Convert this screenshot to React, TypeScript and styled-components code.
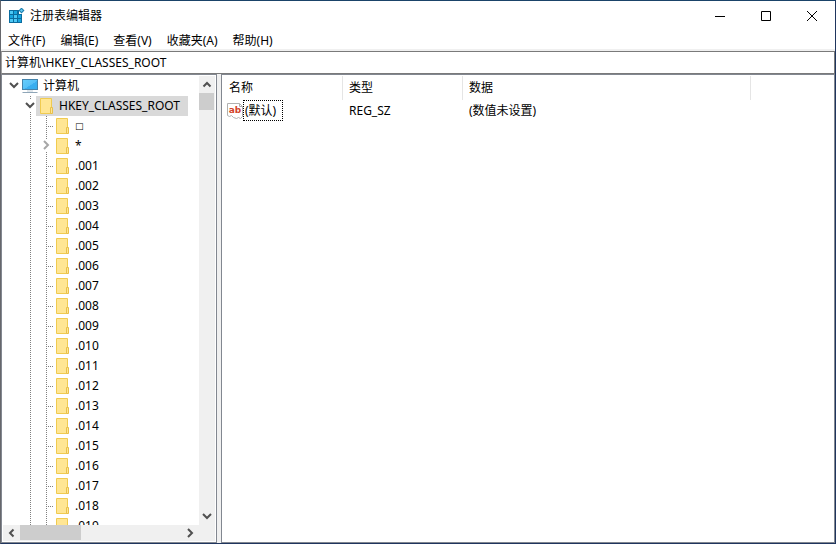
import React, { useState } from "react";
import styled, { createGlobalStyle } from "styled-components";

const GlobalStyle = createGlobalStyle`
  * { box-sizing: border-box; }
  body {
    margin: 0;
    background: #ffffff;
    color: #000000;
    font-family: "Noto Sans", "Noto Sans CJK SC", sans-serif;
    font-size: 12px;
    line-height: 20px;
  }
  button, input { font: inherit; color: inherit; }
`;

const Window = styled.div`
  display: flex;
  flex-direction: column;
  height: 100vh;
  border: 1px solid #1f355e;
  border-top-color: #1a4369;
  border-left-color: #66676c;
  background: #ffffff;
`;

const TitleBar = styled.header`
  display: flex;
  align-items: center;
  height: 30px;
  padding-left: 8px;
  flex: none;
`;

const Title = styled.h1`
  flex: 1;
  margin: 0 0 0 4px;
  font-size: 12px;
  font-weight: 400;
`;

const CaptionButton = styled.button`
  display: flex;
  align-items: center;
  justify-content: center;
  width: 46px;
  height: 30px;
  padding: 0;
  border: 0;
  background: none;
  &:hover { background: #e5e5e5; }
`;

const MenuBar = styled.nav`
  display: flex;
  flex: none;
  gap: 1px;
  height: 20px;
  border-bottom: 2px solid #f0f0f0;
`;

const MenuButton = styled.button`
  padding: 2px 7px 0;
  border: 0;
  background: none;
  line-height: 16px;
  white-space: nowrap;
  &:hover { background: #cce8ff; }
`;

const AddressInput = styled.input`
  flex: none;
  width: 100%;
  height: 23px;
  padding: 0 3px 2px;
  border: 1px solid #7a7a7a;
  border-left-color: #a0a0a0;
  outline: 0;
  background: #ffffff;
`;

const Panes = styled.main`
  display: flex;
  flex: 1;
  gap: 4px;
  min-height: 0;
  background: #f0f0f0;
`;

const Pane = styled.section`
  border: 1px solid #828790;
  background: #ffffff;
  overflow: hidden;
`;

const TreePane = styled(Pane)`
  display: grid;
  grid-template-columns: 1fr 16px;
  grid-template-rows: 1fr 16px;
  flex: none;
  width: 216px;
  padding: 1px;
`;

const ValuePane = styled(Pane)`
  flex: 1;
  padding-top: 1px;
`;

const Tree = styled.ul`
  min-height: 0;
  margin: 0;
  padding: 0 0 0 3px;
  overflow: hidden;
  list-style: none;
`;

const TreeRow = styled.li`
  display: flex;
  height: 20px;
`;

const Guide = styled.span<{ $line?: boolean; $branch?: boolean }>`
  position: relative;
  flex: none;
  width: 16px;
  height: 20px;
  &::before {
    content: "";
    display: ${(p) => (p.$line ? "block" : "none")};
    position: absolute;
    left: 8px;
    top: 0;
    width: 1px;
    height: 20px;
    background: repeating-linear-gradient(#808080 0 1px, transparent 1px 2px);
  }
  &::after {
    content: "";
    display: ${(p) => (p.$branch ? "block" : "none")};
    position: absolute;
    left: 8px;
    top: 10px;
    width: 8px;
    height: 1px;
    background: repeating-linear-gradient(90deg, #808080 0 1px, transparent 1px 2px);
  }
`;

const Expander = styled.button`
  position: absolute;
  z-index: 1;
  inset: 3px 1px 5px 0;
  display: flex;
  align-items: center;
  justify-content: center;
  padding: 0;
  border: 0;
  background: #ffffff;
`;

const Node = styled.button<{ $selected?: boolean }>`
  position: relative;
  z-index: 2;
  display: flex;
  align-items: center;
  gap: 5px;
  height: 20px;
  margin-left: ${(p) => (p.$selected ? "-2px" : "0")};
  padding: 0 8px 0 ${(p) => (p.$selected ? "2px" : "0")};
  border: 0;
  background: ${(p) => (p.$selected ? "#d9d9d9" : "transparent")};
  line-height: 20px;
  white-space: nowrap;
`;

const FolderSlot = styled.span`
  display: flex;
  width: 16px;
  padding-left: 2px;
`;

const BoxName = styled.span`
  font-family: "DejaVu Sans", sans-serif;
  font-size: 9px;
  font-weight: 700;
`;

const Scrollbar = styled.div<{ $horizontal?: boolean }>`
  display: flex;
  flex-direction: ${(p) => (p.$horizontal ? "row" : "column")};
  padding: ${(p) => (p.$horizontal ? "0 1px 0 0" : "0 0 1px")};
  background: #f0f0f0;
`;

const ScrollButton = styled.button`
  display: flex;
  align-items: center;
  justify-content: center;
  flex: 0 0 17px;
  padding: 0;
  border: 0;
  background: none;
`;

const Thumb = styled.div<{ $horizontal?: boolean }>`
  flex: none;
  width: ${(p) => (p.$horizontal ? "61px" : "15px")};
  height: ${(p) => (p.$horizontal ? "15px" : "17px")};
  background: #cdcdcd;
`;

const Spacer = styled.div`
  flex: 1;
`;

const Corner = styled.div`
  background: #f0f0f0;
`;

const ValueTable = styled.table`
  width: 100%;
  border-collapse: separate;
  border-spacing: 0;
  table-layout: fixed;
`;

const Column = styled.col<{ $width?: number }>`
  width: ${(p) => (p.$width ? p.$width + "px" : "auto")};
`;

const HeaderCell = styled.th`
  height: 24px;
  padding: 0 6px;
  border-right: 1px solid #e5e5e5;
  font-weight: 400;
  text-align: left;
  &:first-child { padding-left: 7px; }
  &:last-child { border-right: 0; }
`;

const Cell = styled.td`
  height: 21px;
  padding: 0 6px;
  white-space: nowrap;
`;

const NameCell = styled(Cell)`
  padding: 0 5px;
`;

const ValueName = styled.div`
  display: flex;
  align-items: center;
`;

const FocusLabel = styled.span`
  height: 21px;
  padding: 0 6px 0 1px;
  border: 1px dotted #000000;
  line-height: 19px;
`;

function RegistryIcon() {
  return (
    <svg width="17" height="16" viewBox="0 0 17 16" aria-hidden="true">
      <path d="M0 2h10v4h3v9H0z" fill="#0b6c9f" />
      <g fill="#4cc8f5">
        <path d="M1 3h3v3H1zM5 7h3v3H5zM1 11h3v3H1zM5 11h3v3H5z" />
      </g>
      <g fill="#17a5df">
        <path d="M5 3h3v3H5zM1 7h3v3H1zM9 7h3v3H9zM9 11h3v3H9z" />
      </g>
      <path d="M12.500 -.5l3 3-3 3-3-3z" fill="#1c7fae" />
      <path d="M12.500 1L14 2.500 12.500 4 11 2.500z" fill="#63c9f2" />
    </svg>
  );
}

function ComputerIcon() {
  return (
    <svg width="16" height="16" viewBox="0 0 16 16" aria-hidden="true">
      <defs>
        <linearGradient id="screen" x1="0" y1="0" x2="1" y2="1">
          <stop offset="0" stopColor="#67cdfb" />
          <stop offset=".55" stopColor="#55c0f7" />
          <stop offset=".56" stopColor="#3aaef0" />
          <stop offset="1" stopColor="#35aeee" />
        </linearGradient>
      </defs>
      <path d="M0 1h16v11H0z" fill="#4583ab" />
      <path d="M1 2h14v9H1z" fill="url(#screen)" />
      <path d="M5 12h6v2H5z" fill="#dfe6eb" />
      <path d="M1 14h14l1 1H0z" fill="#8fa6b8" />
    </svg>
  );
}

function FolderIcon() {
  return (
    <svg width="13" height="16" viewBox="0 0 13 16" aria-hidden="true">
      <path d="M.5.5h11v15H.5z" fill="#ffe694" stroke="#f0cb50" />
      <path d="M10.500 15.500v-6h2v6z" fill="#ffe694" stroke="#e8c04a" />
    </svg>
  );
}

function StringIcon() {
  return (
    <svg width="16" height="16" viewBox="0 0 16 16" aria-hidden="true">
      <path
        d="M.5.5h12l3 3v10l-2 2-2-1-2 1-3-1-2-2-2 1-2-1z"
        fill="#ffffff"
        stroke="#b0b0b0"
      />
      <path d="M12.500.500v3h3" fill="none" stroke="#b0b0b0" />
      <text
        x="8"
        y="10"
        textAnchor="middle"
        fontFamily="DejaVu Sans, sans-serif"
        fontWeight="700"
        fontSize="9"
        fill="#d2432a"
      >
        ab
      </text>
    </svg>
  );
}

const chevrons = {
  up: "M1.500 6.500L5 3l3.500 3.500",
  down: "M1 3l4 4 4-4",
  left: "M6.500 1.500L3 5l3.500 3.500",
  right: "M3 1l4 4-4 4",
};

function Chevron({
  direction,
  color = "#505050",
}: {
  direction: keyof typeof chevrons;
  color?: string;
}) {
  return (
    <svg width="10" height="10" viewBox="0 0 10 10" aria-hidden="true">
      <path d={chevrons[direction]} fill="none" stroke={color} strokeWidth="2" />
    </svg>
  );
}

const menus = ["文件(F)", "编辑(E)", "查看(V)", "收藏夹(A)", "帮助(H)"];

const keys = [
  "□",
  "*",
  ...Array.from({ length: 19 }, (_, i) => "." + String(i + 1).padStart(3, "0")),
];

export default function App() {
  const [address, setAddress] = useState("计算机\\HKEY_CLASSES_ROOT");

  return (
    <Window>
      <GlobalStyle />
      <TitleBar>
        <RegistryIcon />
        <Title>注册表编辑器</Title>
        <CaptionButton aria-label="最小化">
          <svg width="10" height="10" viewBox="0 0 10 10">
            <path d="M0 5h10v1H0z" />
          </svg>
        </CaptionButton>
        <CaptionButton aria-label="最大化">
          <svg width="10" height="10" viewBox="0 0 10 10">
            <path d="M.5.5h9v9h-9z" fill="none" stroke="#000000" />
          </svg>
        </CaptionButton>
        <CaptionButton aria-label="关闭">
          <svg width="10" height="10" viewBox="0 0 10 10">
            <path d="M0 0l10 10M10 0L0 10" fill="none" stroke="#000000" />
          </svg>
        </CaptionButton>
      </TitleBar>
      <MenuBar>
        {menus.map((menu) => (
          <MenuButton key={menu}>{menu}</MenuButton>
        ))}
      </MenuBar>
      <AddressInput
        aria-label="地址"
        value={address}
        onChange={(e) => setAddress(e.target.value)}
      />
      <Panes>
        <TreePane>
          <Tree>
            <TreeRow>
              <Guide>
                <Expander aria-label="折叠">
                  <Chevron direction="down" />
                </Expander>
              </Guide>
              <Node>
                <ComputerIcon />
                计算机
              </Node>
            </TreeRow>
            <TreeRow>
              <Guide />
              <Guide $line>
                <Expander aria-label="折叠">
                  <Chevron direction="down" />
                </Expander>
              </Guide>
              <Node $selected>
                <FolderSlot>
                  <FolderIcon />
                </FolderSlot>
                HKEY_CLASSES_ROOT
              </Node>
            </TreeRow>
            {keys.map((name) => (
              <TreeRow key={name}>
                <Guide />
                <Guide $line />
                <Guide $line $branch={name !== "*"}>
                  {name === "*" && (
                    <Expander aria-label="展开">
                      <Chevron direction="right" color="#a6a6a6" />
                    </Expander>
                  )}
                </Guide>
                <Node>
                  <FolderSlot>
                    <FolderIcon />
                  </FolderSlot>
                  {name === "□" ? <BoxName>{name}</BoxName> : name}
                </Node>
              </TreeRow>
            ))}
          </Tree>
          <Scrollbar>
            <ScrollButton aria-label="向上滚动">
              <Chevron direction="up" />
            </ScrollButton>
            <Thumb />
            <Spacer />
            <ScrollButton aria-label="向下滚动">
              <Chevron direction="down" />
            </ScrollButton>
          </Scrollbar>
          <Scrollbar $horizontal>
            <ScrollButton aria-label="向左滚动">
              <Chevron direction="left" />
            </ScrollButton>
            <Thumb $horizontal />
            <Spacer />
            <ScrollButton aria-label="向右滚动">
              <Chevron direction="right" />
            </ScrollButton>
          </Scrollbar>
          <Corner />
        </TreePane>
        <ValuePane>
          <ValueTable>
            <colgroup>
              <Column $width={121} />
              <Column $width={120} />
              <Column $width={288} />
              <Column />
            </colgroup>
            <thead>
              <tr>
                <HeaderCell>名称</HeaderCell>
                <HeaderCell>类型</HeaderCell>
                <HeaderCell>数据</HeaderCell>
                <HeaderCell />
              </tr>
            </thead>
            <tbody>
              <tr>
                <NameCell>
                  <ValueName>
                    <StringIcon />
                    <FocusLabel>(默认)</FocusLabel>
                  </ValueName>
                </NameCell>
                <Cell>REG_SZ</Cell>
                <Cell>(数值未设置)</Cell>
                <Cell />
              </tr>
            </tbody>
          </ValueTable>
        </ValuePane>
      </Panes>
    </Window>
  );
}
